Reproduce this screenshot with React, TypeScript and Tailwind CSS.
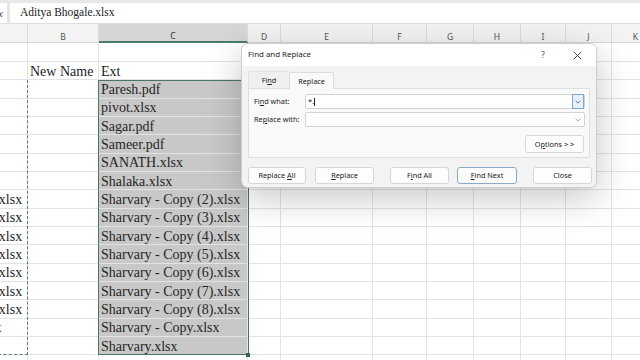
import React from 'react';

// Spreadsheet with the Find and Replace dialog open over it

const COLS =
  'grid grid-cols-[28px_71px_149px_33px_92px_54px_47px_47px_45px_46px_48px]';
const LETTERS = ['A', 'B', 'C', 'D', 'E', 'F', 'G', 'H', 'I', 'J', 'K'];

const NAMES = [
  'Paresh.pdf',
  'pivot.xlsx',
  'Sagar.pdf',
  'Sameer.pdf',
  'SANATH.xlsx',
  'Shalaka.xlsx',
  'Sharvary - Copy (2).xlsx',
  'Sharvary - Copy (3).xlsx',
  'Sharvary - Copy (4).xlsx',
  'Sharvary - Copy (5).xlsx',
  'Sharvary - Copy (6).xlsx',
  'Sharvary - Copy (7).xlsx',
  'Sharvary - Copy (8).xlsx',
  'Sharvary - Copy.xlsx',
  'Sharvary.xlsx',
];

const cell = 'border-r border-b border-[#e3e3e3] overflow-hidden whitespace-nowrap';
const serif = "font-['Liberation_Serif','Times_New_Roman',serif]";

function Row({ a, b, c, selected, height }: { a?: string; b?: string; c?: string; selected?: boolean; height: string }) {
  return (
    <div className={`${COLS} ${height} ${serif} text-[14px] leading-[16px] text-[#1d1d1d]`}>
      <div className={`${cell} flex items-center pt-[2px]`}>
        {a && <span className="ml-[-117px]">{a}</span>}
      </div>
      <div className={`${cell} flex items-center px-[2px] pt-[2px]`}>{b}</div>
      <div
        className={`${cell} flex items-center px-[2px] pt-[2px] ${selected ? 'bg-[#c8c8c8] border-[#c8c8c8] text-[#262626]' : ''}`}
      >
        {c}
      </div>
      {LETTERS.slice(3).map((l) => (
        <div key={l} className={cell} />
      ))}
    </div>
  );
}

function Btn({ children, primary, w }: { children: React.ReactNode; primary?: boolean; w: string }) {
  return (
    <div
      className={`${w} h-[17px] flex items-center justify-center rounded-[3px] border bg-[#fdfdfd] ${
        primary ? 'border-[#8aa9c6]' : 'border-[#d6d6d6]'
      }`}
    >
      <span>{children}</span>
    </div>
  );
}

function Chevron({ color = '#6f7d8c' }: { color?: string }) {
  return (
    <svg width="6" height="4" viewBox="0 0 6 4">
      <path d="M0.6 0.8 L3 3.1 L5.4 0.8" fill="none" stroke={color} strokeWidth="0.9" />
    </svg>
  );
}

function Dialog() {
  return (
    <div className="absolute left-[241px] top-0 w-[356px] h-[145px] rounded-[7px] border border-[#cdcdcd] bg-[#f3f3f3] shadow-[0_10px_36px_rgba(0,0,0,0.22)] font-['Noto_Sans',sans-serif] text-[7.3px] text-[#222] flex flex-col overflow-hidden">
      {/* title bar */}
      <div className="h-[22px] shrink-0 bg-white flex items-center pl-[6px] pr-[14px]">
        <span className="text-[7.9px] text-[#1e1e1e]">Find and Replace</span>
        <div className="ml-auto flex items-center gap-[25px]">
          <span className="w-[10px] text-center text-[8px] text-[#444]">?</span>
          <svg width="9" height="9" viewBox="0 0 9 9">
            <path d="M0.8 0.8 L8.2 8.2 M8.2 0.8 L0.8 8.2" stroke="#333" strokeWidth="0.9" />
          </svg>
        </div>
      </div>

      {/* tabs */}
      <div className="mt-[5px] ml-[6px] flex h-[17px] shrink-0">
        <div className="w-[41px] flex items-center justify-center bg-[#efefef] border-t border-l border-[#e2e2e2] rounded-tl-[2px]">
          <span>
            Fi<span className="underline">n</span>d
          </span>
        </div>
        <div className="w-[45px] flex items-center justify-center bg-[#f9f9f9] border-t border-x border-[#dcdcdc] rounded-t-[2px] relative top-[1px]">
          Replace
        </div>
      </div>

      {/* panel */}
      <div className="ml-[6px] w-[342px] h-[70px] shrink-0 bg-[#f9f9f9] border border-[#dedede] pt-[5px]">
        <div className="flex items-center h-[15px]">
          <div className="w-[56px] pl-[5px]">
            Fi<span className="underline">n</span>d what:
          </div>
          <div className="w-[280px] h-[15px] bg-white border border-[#d2d2d2] rounded-[2px] flex items-center">
            <span className="pl-[2px] text-[7.5px]">*.</span>
            <span className="w-[1px] h-[8px] bg-[#222]" />
            <div className="ml-auto w-[12px] h-[15px] border border-[#7fa6cf] bg-[#e6f0fa] flex items-center justify-center">
              <Chevron color="#4c6c8f" />
            </div>
          </div>
        </div>
        <div className="flex items-center h-[15px] mt-[3px]">
          <div className="w-[56px] pl-[5px]">
            Re<span className="underline">p</span>lace with:
          </div>
          <div className="w-[280px] h-[15px] bg-white border border-[#d2d2d2] rounded-[2px] flex items-center justify-end pr-[3px]">
            <Chevron color="#a0a0a0" />
          </div>
        </div>
        <div className="flex justify-end pr-[5px] mt-[8px]">
          <div className="w-[59px] h-[18px] flex items-center justify-center rounded-[3px] border border-[#d6d6d6] bg-[#fdfdfd]">
            <span>
              O<span className="underline">p</span>tions &gt; &gt;
            </span>
          </div>
        </div>
      </div>

      {/* buttons */}
      <div className="mt-[9px] ml-[6px] flex shrink-0">
        <Btn w="w-[58px]">
          Replace <span className="underline">A</span>ll
        </Btn>
        <div className="w-[9px]" />
        <Btn w="w-[59px]">
          <span className="underline">R</span>eplace
        </Btn>
        <div className="w-[16px]" />
        <Btn w="w-[59px]">
          F<span className="underline">i</span>nd All
        </Btn>
        <div className="w-[8px]" />
        <Btn w="w-[60px]" primary>
          <span className="underline">F</span>ind Next
        </Btn>
        <div className="w-[16px]" />
        <Btn w="w-[59px]">Close</Btn>
      </div>
    </div>
  );
}

export default function App() {
  return (
    <div className="w-[640px] h-[360px] overflow-hidden bg-white relative">
      {/* formula bar */}
      <div className="h-[3px] bg-[#e8e8e8]" />
      <div className="h-[21px] flex bg-[#f7f7f7] border-b border-[#e0e0e0]">
        <div className="w-[7px] overflow-hidden flex items-center bg-white">
          <span className="italic text-[11px] text-[#444] font-['Liberation_Serif',serif] ml-[-2px]">x</span>
        </div>
        <div className="w-[3px] bg-[#e6e6e6]" />
        <div className={`flex-1 bg-white flex items-center pl-[10px] ${serif} text-[11.5px] text-[#222]`}>
          Aditya Bhogale.xlsx
        </div>
      </div>

      {/* column headers */}
      <div className={`${COLS} h-[19px] bg-[#f3f3f3] font-['Noto_Sans',sans-serif] text-[8.5px] leading-none text-[#555]`}>
        {LETTERS.map((l) => (
          <div
            key={l}
            className={`flex items-end justify-center pb-[1px] border-r border-[#dcdcdc] ${
              l === 'C' ? 'bg-[#d6d6d6] border-b-2 border-b-[#4b7d66] text-[#333]' : 'border-b border-b-[#d6d6d6]'
            }`}
          >
            {l === 'A' ? '' : l}
          </div>
        ))}
      </div>

      {/* grid */}
      <div className="relative">
        <Row height="h-[19px]" />
        <Row height="h-[18.33px]" b="New Name" c="Ext" />
        {NAMES.map((n) => (
          <Row key={n} height="h-[18.33px]" a={n} c={n} selected />
        ))}
        <Row height="h-[18.33px]" />

        {/* selection outline */}
        <div className="absolute left-[98px] top-[37px] w-[151px] h-[275px] border border-[#4a7563]" />
        <div className="absolute left-[246px] top-[310px] w-[4px] h-[4px] bg-[#3b6452]" />
        {/* copy marquee around column A */}
        <div className="absolute left-[-2px] top-[37px] w-[30px] h-[275px] border-r border-b border-dashed border-[#587e6d]" />

        <Dialog />
      </div>
    </div>
  );
}
